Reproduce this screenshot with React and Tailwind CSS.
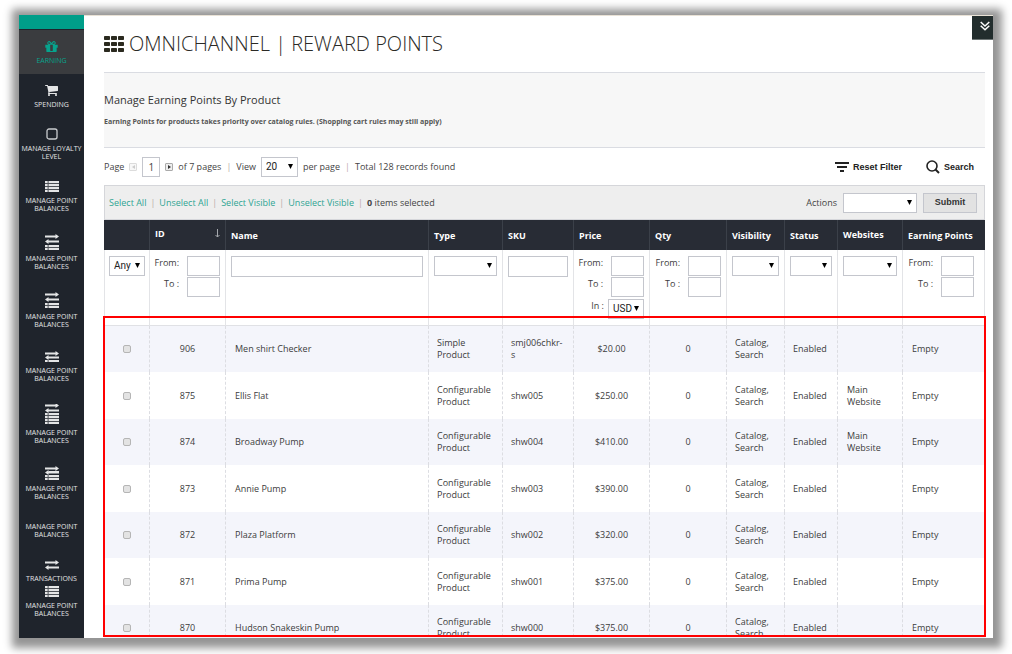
import React from 'react';

const BAR = 'fill-[#e4e5e6]';

function GiftIcon() {
  return (
    <svg viewBox="100 180 1592 1360" className="h-[11px] w-[13px] fill-[#07a38d]" aria-hidden="true">
      <path d="M1055 1356v-56-468-192h-320v192 468 56q0 25 18 38.5t46 13.5h192q28 0 46-13.5t18-38.5zM593 512h195l-126-161q-26-31-69-31-40 0-68 28t-28 68 28 68 68 28zM1291 416q0-40-28-68t-68-28q-43 0-69 31l-125 161h194q40 0 68-28t28-68zM1664 672v320q0 14-9 23t-23 9h-96v416q0 40-28 68t-68 28h-1088q-40 0-68-28t-28-68v-416h-96q-14 0-23-9t-9-23v-320q0-14 9-23t23-9h440q-93 0-158.5-65.5t-65.5-158.5 65.5-158.5 158.5-65.5q107 0 168 77l128 165 128-165q61-77 168-77 93 0 158.5 65.5t65.5 158.5-65.5 158.5-158.5 65.5h440q14 0 23 9t9 23z" />
    </svg>
  );
}

function CartIcon() {
  return (
    <svg viewBox="64 256 1664 1408" className="h-[11px] w-[13px] fill-[#e4e5e6]" aria-hidden="true">
      <path d="M704 1536q0 52-38 90t-90 38-90-38-38-90 38-90 90-38 90 38 38 90zm896 0q0 52-38 90t-90 38-90-38-38-90 38-90 90-38 90 38 38 90zm128-1088v512q0 24-16.5 42.5t-40.5 21.5l-1044 122q13 60 13 70 0 16-24 64h920q26 0 45 19t19 45-19 45-45 19h-1024q-26 0-45-19t-19-45q0-11 8-31.5t16-36 21.5-40 15.5-29.5l-177-823h-204q-26 0-45-19t-19-45 19-45 45-19h256q16 0 28.5 6.5t19.5 15.5 13 24.5 8 26 5.5 29.5 4.5 26h1201q26 0 45 19t19 45z" />
    </svg>
  );
}

function SquareIcon() {
  return (
    <svg viewBox="0 0 12 12" className="h-3 w-3 fill-none stroke-[#c9cbce]" aria-hidden="true">
      <rect x="1" y="1" width="10" height="10" rx="2" strokeWidth="1.3" />
    </svg>
  );
}

function ListRows({ y, rows }) {
  return (
    <>
      <rect x="0" y={y} width="14" height={rows * 3 - 1} className="fill-[#4d5157]" />
      {Array.from({ length: rows }, (_, i) => (
        <g key={i} className={BAR}>
          <rect x="0" y={y + i * 3} width="2.6" height="2" />
          <rect x="3.6" y={y + i * 3} width="10.4" height="2" />
        </g>
      ))}
    </>
  );
}

function Arrows({ y, low = 5 }) {
  const b = y + low;
  return (
    <g className={BAR}>
      <path d={`M0 ${y + 1.5}h10.5V${y}l3.5 2.5-3.5 2.5V${y + 3.5}H0z`} />
      <path d={`M14 ${b + 1.5}H3.5V${b}L0 ${b + 2.5}l3.5 2.5V${b + 3.5}h10.5z`} />
    </g>
  );
}

function ListIcon() {
  return (
    <svg viewBox="0 0 14 11" className="h-[11px] w-3.5" aria-hidden="true">
      <ListRows y={0} rows={4} />
    </svg>
  );
}

function ArrowsIcon() {
  return (
    <svg viewBox="0 0 14 10" className="h-2.5 w-3.5" aria-hidden="true">
      <Arrows y={0} />
    </svg>
  );
}

function ArrowsListIcon() {
  return (
    <svg viewBox="0 0 14 16" className="h-4 w-3.5" aria-hidden="true">
      <Arrows y={0} />
      <ListRows y={11} rows={2} />
    </svg>
  );
}

function ArrowsListShortIcon() {
  return (
    <svg viewBox="0 0 14 11" className="h-[11px] w-3.5" aria-hidden="true">
      <Arrows y={0} low={4} />
      <ListRows y={9} rows={1} />
    </svg>
  );
}

function ArrowsListTallIcon() {
  return (
    <svg viewBox="0 0 14 20" className="h-5 w-3.5" aria-hidden="true">
      <Arrows y={-1} />
      <ListRows y={9} rows={4} />
    </svg>
  );
}

function ArrowsListTightIcon() {
  return (
    <svg viewBox="0 0 14 14" className="h-3.5 w-3.5" aria-hidden="true">
      <rect x="3.6" y="5" width="10.4" height="1.5" className={BAR} />
      <Arrows y={0} low={4} />
      <ListRows y={9} rows={2} />
    </svg>
  );
}

const MENU = [
  { label: 'EARNING', Icon: GiftIcon, box: 'h-11 pb-[9px] mt-px bg-[#3a3c3f] text-[#07a38d]' },
  { label: 'SPENDING', Icon: CartIcon, box: 'h-[35px]' },
  { label: 'MANAGE LOYALTY LEVEL', Icon: SquareIcon, box: 'h-[52px]' },
  { label: 'MANAGE POINT BALANCES', Icon: ListIcon, box: 'h-[52px]' },
  { label: 'MANAGE POINT BALANCES', Icon: ArrowsListIcon, box: 'h-[58px]' },
  { label: 'MANAGE POINT BALANCES', Icon: ArrowsListIcon, box: 'h-[58px]' },
  { label: 'MANAGE POINT BALANCES', Icon: ArrowsListShortIcon, box: 'h-[54px]' },
  { label: 'MANAGE POINT BALANCES', Icon: ArrowsListTallIcon, box: 'h-[62px]' },
  { label: 'MANAGE POINT BALANCES', Icon: ArrowsListTightIcon, box: 'h-[56px]' },
  { label: 'MANAGE POINT BALANCES', Icon: null, box: 'h-[38px]' },
  { label: 'TRANSACTIONS', Icon: ArrowsIcon, box: 'h-11' },
  { label: 'MANAGE POINT BALANCES', Icon: ListIcon, box: '-mt-0.5 h-[37px] bg-[#1f242c]' },
];

function Sidebar() {
  return (
    <nav className="w-[65px] shrink-0 overflow-hidden bg-[#1f242c]">
      <div className="h-3.5 bg-[#009e89]" />
      <ul>
        {MENU.map(({ label, Icon, box }, i) => (
          <li key={i}>
            <a
              href="#"
              className={`relative flex flex-col items-center justify-end gap-[5px] px-0.5 text-center text-[7px] leading-[8px] ${
                i === 0 ? '' : 'text-[#e4e5e6]'
              } ${box}`}
            >
              {Icon && <Icon />}
              <span className="max-w-[61px]">{label}</span>
            </a>
          </li>
        ))}
      </ul>
    </nav>
  );
}

function Select({ label, options = [''], className = '' }) {
  return (
    <span className={`relative block h-5 ${className}`}>
      <select
        aria-label={label}
        className="block h-full w-full appearance-none border border-[#c4c6cd] bg-white pl-1 font-['Roboto',sans-serif] text-[10px] leading-[18px] text-[#222]"
      >
        {options.map((o) => (
          <option key={o}>{o}</option>
        ))}
      </select>
      <svg viewBox="0 0 5 5" className="pointer-events-none absolute top-[7px] right-[5px] h-[5px] w-[5px] fill-black" aria-hidden="true">
        <path d="M0 0h5L2.5 5z" />
      </svg>
    </span>
  );
}

function Range({ name, currency }) {
  return (
    <div className="flex flex-col items-end gap-px">
      {['From:', 'To :'].map((t) => (
        <label key={t} className="flex gap-2">
          <span className="leading-[13px]">{t}</span>
          <input aria-label={`${name} ${t}`} className="h-5 w-[33px] border border-[#c4c6cd] bg-white px-1" />
        </label>
      ))}
      {currency && (
        <div className="mt-px flex gap-1">
          <span className="leading-[13px]">In :</span>
          <Select label="Currency" options={['USD']} className="w-9" />
        </div>
      )}
    </div>
  );
}

function Sep() {
  return <span className="text-[#b9a9a9]">|</span>;
}

const ROWS = [
  ['906', 'Men shirt Checker', 'Simple Product', 'smj006chkr-s', '$20.00', ''],
  ['875', 'Ellis Flat', 'Configurable Product', 'shw005', '$250.00', 'Main Website'],
  ['874', 'Broadway Pump', 'Configurable Product', 'shw004', '$410.00', 'Main Website'],
  ['873', 'Annie Pump', 'Configurable Product', 'shw003', '$390.00', ''],
  ['872', 'Plaza Platform', 'Configurable Product', 'shw002', '$320.00', ''],
  ['871', 'Prima Pump', 'Configurable Product', 'shw001', '$375.00', ''],
  ['870', 'Hudson Snakeskin Pump', 'Configurable Product', 'shw000', '$375.00', ''],
];

const TH = 'border-r border-[#3b4049] px-[5px] pt-px text-left font-bold last:border-r-0';
const FILTER = 'border-r border-[#e3e4e7] px-[5px] pt-1.5 align-top';
const RANGE = 'border-r border-[#e3e4e7] pr-[5px] pt-1.5 align-top';
const CELL = 'border-r border-dashed border-[#dcdde2] leading-[12px] last:border-r-0';
const TD = `${CELL} px-2`;
const WIDE = `${CELL} px-[9px]`;
const FIELD = 'block h-[21px] w-full border border-[#c4c6cd] bg-white px-1';

function ProductTable() {
  return (
    <table className="w-full table-fixed border-separate border-spacing-0 text-[9px] text-[#3c3c3c]">
      <colgroup>
        <col className="w-[46px]" />
        <col className="w-[76px]" />
        <col />
        <col className="w-[74px]" />
        <col className="w-[71px]" />
        <col className="w-[76px]" />
        <col className="w-[77px]" />
        <col className="w-[58px]" />
        <col className="w-[53px]" />
        <col className="w-[65px]" />
        <col className="w-[82px]" />
      </colgroup>
      <thead>
        <tr className="h-[30px] bg-[#282c35] text-white">
          <th className={TH} aria-label="Select" />
          <th className={TH}>
            <span className="flex items-center justify-between pb-1">
              ID
              <svg viewBox="0 0 5 9" className="h-[9px] w-[5px] fill-none stroke-[#a5a8ad]" aria-hidden="true">
                <path d="M2.5 0v8M.5 6l2 2 2-2" />
              </svg>
            </span>
          </th>
          <th className={TH}>Name</th>
          <th className={TH}>Type</th>
          <th className={TH}>SKU</th>
          <th className={TH}>Price</th>
          <th className={TH}>Qty</th>
          <th className={TH}>Visibility</th>
          <th className={TH}>Status</th>
          <th className={TH}>
            <span className="block pb-0.5">Websites</span>
          </th>
          <th className={TH}>Earning Points</th>
        </tr>
        <tr className="h-[76px] [&>td]:border-b [&>td]:border-b-[#e0e1e5]">
          <td className="border-x border-[#e3e4e7] px-1 pt-1.5 align-top">
            <Select label="Any" options={['Any']} />
          </td>
          <td className={RANGE}><Range name="ID" /></td>
          <td className={FILTER}><input aria-label="Name" className={FIELD} /></td>
          <td className={FILTER}><Select label="Type" /></td>
          <td className={FILTER}><input aria-label="SKU" className={FIELD} /></td>
          <td className={RANGE}><Range name="Price" currency /></td>
          <td className={RANGE}><Range name="Qty" /></td>
          <td className={FILTER}><Select label="Visibility" /></td>
          <td className={FILTER}><Select label="Status" /></td>
          <td className={FILTER}><Select label="Websites" /></td>
          <td className="border-r border-[#e3e4e7] pt-1.5 pr-2.5 align-top"><Range name="Earning Points" /></td>
        </tr>
      </thead>
      <tbody>
        {ROWS.map(([id, name, type, sku, price, site]) => (
          <tr key={id} className="h-[46px] odd:bg-[#f4f5fb] even:h-[47px]">
            <td className={CELL}>
              <input
                type="checkbox"
                aria-label={`Select ${name}`}
                className="mx-auto block h-2 w-2 appearance-none rounded-[2px] border border-[#b5b5b5] bg-[#e3e3e3]"
              />
            </td>
            <td className={`${TD} text-center`}>{id}</td>
            <td className={WIDE}>{name}</td>
            <td className={TD}>{type}</td>
            <td className={TD}>{sku}</td>
            <td className={`${TD} text-center`}>{price}</td>
            <td className={`${TD} text-center`}>0</td>
            <td className={TD}>Catalog, Search</td>
            <td className={TD}>Enabled</td>
            <td className={WIDE}>{site}</td>
            <td className={WIDE}>Empty</td>
          </tr>
        ))}
      </tbody>
    </table>
  );
}

function PageArrow({ label, flip, muted }) {
  return (
    <button
      type="button"
      aria-label={label}
      className={`flex h-2 w-2 items-center justify-center rounded-[1px] border ${
        muted ? 'border-[#dcdcdc] bg-[#f8f8f8]' : 'border-[#aaa] bg-[#eee]'
      }`}
    >
      <svg viewBox="0 0 3 4" className={`h-1 w-[3px] ${muted ? 'fill-[#ccc]' : 'fill-[#333]'}`} aria-hidden="true">
        <path d={flip ? 'M3 0v4L0 2z' : 'M0 0v4l3-2z'} />
      </svg>
    </button>
  );
}

export default function App() {
  return (
    <div className="h-screen overflow-hidden bg-white px-[19px] pt-[15px] pb-4 font-['Open_Sans','Noto_Sans',sans-serif] text-[#444]">
      <div className="relative flex h-full bg-white shadow-[1px_2px_8px_8px_#959595]">
        <Sidebar />
        <main className="flex min-w-0 flex-1 flex-col overflow-hidden border-t border-[#e9e2d6] pr-2 pl-5">
          <h1 className="flex h-14 shrink-0 items-center gap-[5px] text-[20px] leading-6 font-[340] text-[#2b2a26]">
            <svg viewBox="0 0 20 16" className="h-4 w-5 fill-[#2b2a1f]" aria-hidden="true">
              {[0, 7, 14].map((x) =>
                [0, 6, 12].map((y) => <rect key={`${x}-${y}`} x={x} y={y} width="6" height="4" rx="0.8" />)
              )}
            </svg>
            OMNICHANNEL | REWARD POINTS
          </h1>

          <section className="h-[76px] shrink-0 border-y border-[#dadce2] bg-[#f7f7f7] pt-5">
            <h2 className="text-[11px] leading-[14px] font-medium text-[#333]">Manage Earning Points By Product</h2>
            <p className="mt-2 text-[7px] leading-[14px] font-bold text-[#555]">
              Earning Points for products takes priority over catalog rules. (Shopping cart rules may still apply)
            </p>
          </section>

          <div className="flex h-[37px] shrink-0 items-center justify-between text-[9px] leading-[14px]">
            <div className="flex items-center gap-[5px]">
              <span>Page</span>
              <PageArrow label="Previous page" flip muted />
              <input
                aria-label="Page number"
                defaultValue="1"
                className="h-5 w-[18px] border border-[#c4c6cd] bg-white text-center text-[10px]"
              />
              <PageArrow label="Next page" />
              <span>of 7 pages</span>
              <Sep />
              <span>View</span>
              <Select label="Per page" options={['20']} className="w-[37px]" />
              <span>per page</span>
              <Sep />
              <span>Total 128 records found</span>
            </div>
            <div className="flex items-center gap-[24px] pr-[11px] font-['Liberation_Sans',Arial,sans-serif] text-[9px] font-bold text-[#222]">
              <button type="button" className="flex items-center gap-1">
                <svg viewBox="0 0 14 10" className="h-2.5 w-3.5 fill-[#222]" aria-hidden="true">
                  <path d="M0 0h14v2H0zM2 4h10v2H2zM5 8h4v2H5z" />
                </svg>
                Reset Filter
              </button>
              <button type="button" className="flex items-center gap-1">
                <svg viewBox="0 0 14 14" className="h-3.5 w-3.5 fill-none stroke-[#222]" strokeWidth="1.6" aria-hidden="true">
                  <circle cx="6" cy="6" r="5" />
                  <path d="M9.5 9.5 13 13" strokeWidth="2" />
                </svg>
                Search
              </button>
            </div>
          </div>

          <div className="flex h-[35px] shrink-0 items-center justify-between border border-[#d5d6da] bg-[#eee] pr-[7px] pl-1 text-[9px]">
            <div className="flex items-center gap-1 text-[#2fa593]">
              <a href="#">Select All</a>
              <Sep />
              <a href="#">Unselect All</a>
              <Sep />
              <a href="#">Select Visible</a>
              <Sep />
              <a href="#">Unselect Visible</a>
              <Sep />
              <span className="text-[#444]"><b>0</b> items selected</span>
            </div>
            <div className="flex items-center gap-1.5">
              <span>Actions</span>
              <Select label="Actions" className="w-[74px]" />
              <button
                type="button"
                className="h-5 w-[54px] border border-[#c4c6cd] bg-[#e2e2e2] font-['Liberation_Sans',Arial,sans-serif] text-[9px] font-bold text-[#333]"
              >
                Submit
              </button>
            </div>
          </div>

          <div className="relative min-h-0 flex-1">
            <div className="h-full overflow-hidden">
              <ProductTable />
            </div>
            <div className="pointer-events-none absolute -inset-x-px top-24 bottom-px border-2 border-[#ff0000]" />
          </div>
        </main>
        <button
          type="button"
          aria-label="Collapse"
          className="absolute top-px right-0 flex h-6 w-[21px] items-center justify-end border-b border-[#6d7575] bg-[#222d2d] pr-[3px] pb-1"
        >
          <svg viewBox="0 0 10 10" className="h-2.5 w-2.5 fill-none stroke-white" strokeWidth="1.5" aria-hidden="true">
            <path d="M.7 1 5 5l4.3-4M.7 4.8 5 8.8l4.3-4" />
          </svg>
        </button>
      </div>
    </div>
  );
}
